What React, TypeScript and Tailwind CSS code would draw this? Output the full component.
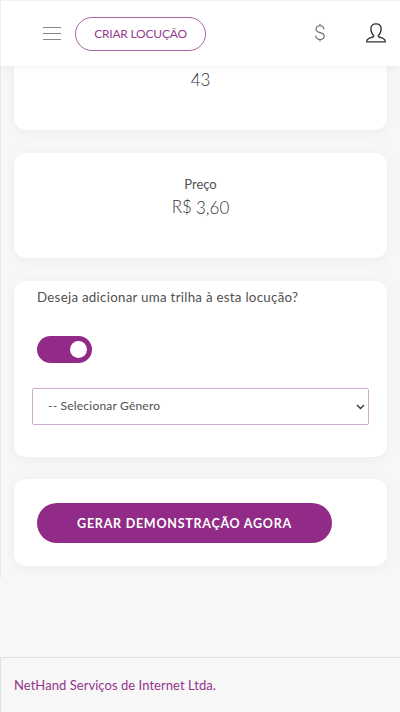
import { useState, type ReactNode } from 'react';

interface CardProps {
  className?: string;
  children: ReactNode;
}

function Card({ className = '', children }: CardProps) {
  return (
    <section className={`rounded-xl bg-white shadow-[0_2px_12px_rgba(0,0,0,0.05)] ${className}`}>
      {children}
    </section>
  );
}

function DollarIcon() {
  return (
    <svg width="12" height="20" viewBox="0 0 12 20" fill="none" stroke="#666" strokeWidth="1.1">
      <path d="M6 .8v2M6 16.4v2M10 6.6C10 4.300 8.400 2.800 6 2.800S2 4.100 2 6.200c0 4.500 8.200 2.300 8.200 6.800 0 2.100-1.800 3.500-4.200 3.500s-4.300-1.600-4.300-3.900" />
    </svg>
  );
}

function UserIcon() {
  return (
    <svg width="20" height="20" viewBox="0 0 20 20" fill="none" stroke="#303030" strokeWidth="1.3" strokeLinejoin="round">
      <path d="M7.600 12.400C5.900 11 4.900 8.700 4.900 5.800 4.900 2.500 6.800.9 10 .9s5.100 1.600 5.100 4.900c0 2.900-1 5.200-2.700 6.600v1.200c1.300.9 3.200 1.300 5 2 1.300.5 1.900 1.500 1.900 3.300H.7c0-1.800.6-2.800 1.900-3.300 1.800-.7 3.700-1.100 5-2z" />
    </svg>
  );
}

export default function App() {
  const [withTrack, setWithTrack] = useState(true);

  return (
    <div className="flex h-[712px] w-[400px] flex-col overflow-hidden bg-[#f7f7f7] font-['Lato','Noto_Sans',sans-serif] text-[#505050]">
      {/* Header */}
      <header className="relative z-10 flex h-[66px] shrink-0 items-center border-t border-l border-[#f0f0f5] bg-white pr-[14px] pl-[42px] shadow-[0_1px_10px_rgba(0,0,0,0.06)]">
        <button aria-label="Menu" className="flex h-[13px] w-[18px] flex-col justify-between">
          <span className="h-px w-full bg-[#888]" />
          <span className="h-px w-full bg-[#888]" />
          <span className="h-px w-full bg-[#888]" />
        </button>
        <button className="ml-[14px] flex h-[34px] w-[131px] items-center justify-center rounded-full border border-[#a764a2] text-[12px] tracking-[-0.2px] whitespace-nowrap text-[#96408f]">
          CRIAR LOCUÇÃO
        </button>
        <div className="mb-px ml-auto flex items-center gap-10">
          <DollarIcon />
          <UserIcon />
        </div>
      </header>

      {/* Cards */}
      <main className="flex h-[512px] shrink-0 flex-col border-l border-[#e9e9ed] pr-[13px] pl-[13px]">
        <Card className="-mt-3 h-[76px] shrink-0 pt-[14px] text-center text-[17px] leading-6 font-light text-[#333]">
          43
        </Card>

        <Card className="mt-[23px] h-[105px] shrink-0 pt-[21px] text-center">
          <div className="text-[13px] leading-5">Preço</div>
          <div className="flex justify-center gap-1 pt-[2px] text-[17px] leading-6 font-light text-[#333]">
            <span className="-mt-px">R$</span>
            <span>3,60</span>
          </div>
        </Card>

        <Card className="mt-[23px] flex h-[176px] shrink-0 flex-col items-start pl-[18px]">
          <p className="mt-[6px] ml-[5px] text-[13.3px] leading-5 tracking-[0.28px] whitespace-nowrap">
            Deseja adicionar uma trilha à esta locução?
          </p>
          <button
            role="switch"
            aria-checked={withTrack}
            onClick={() => setWithTrack(!withTrack)}
            className={`mt-[29px] ml-[5px] flex h-[27px] w-[55px] items-center rounded-full px-[5px] ${withTrack ? 'justify-end bg-[#922b88]' : 'justify-start bg-[#ccc]'}`}
          >
            <span className="size-[17px] rounded-full bg-white" />
          </button>
          <button className="mt-[25px] flex h-[37px] w-[337px] items-center justify-between rounded-xs border border-[#d0adcd] pr-[3px] pl-[15px] text-[12px]">
            <span className="-mt-px tracking-[0.2px]">-- Selecionar Gênero</span>
            <svg width="9" height="6" viewBox="0 0 9 6" fill="none" stroke="#333" strokeWidth="1.4">
              <path d="M1 1l3.500 3.500L8 1" />
            </svg>
          </button>
        </Card>

        <Card className="mt-[22px] h-[87px] shrink-0 pt-6 pl-[23px]">
          <button className="flex h-10 w-[295px] items-center justify-center rounded-full bg-[#922b88] pt-[3px] text-[12.500px] font-bold tracking-[0.75px] whitespace-nowrap text-white">
            GERAR DEMONSTRAÇÃO AGORA
          </button>
        </Card>
      </main>

      {/* Footer */}
      <footer className="mt-[79px] flex-1 border-t border-l border-[#e2e2e4] pt-[17px] pl-[13px] text-[13px] leading-5 tracking-[0.05px] text-[#93358b]">
        NetHand Serviços de Internet Ltda.
      </footer>
    </div>
  );
}
